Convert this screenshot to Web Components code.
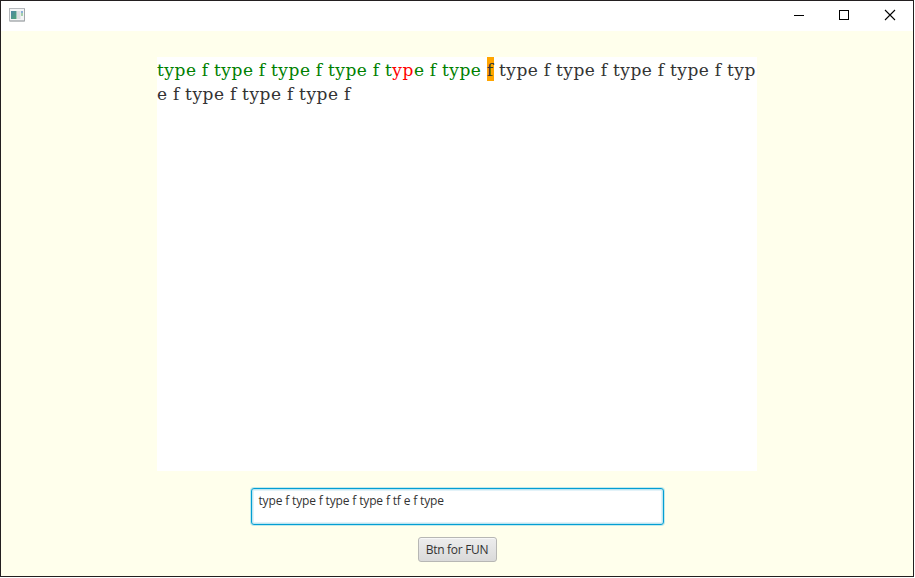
<!DOCTYPE html>
<html lang="en"><head><meta charset="utf-8"><title>Typing</title>
<style>html,body{margin:0;background:#fff;overflow:hidden}</style></head>
<body>
<app-window>
  <title-bar slot="bar"></title-bar>
  <typing-text></typing-text>
  <text-input>type f type f type f type f tf e f type</text-input>
  <push-button>Btn for FUN</push-button>
</app-window>
<script>
const define = (name, html) => customElements.define(name, class extends HTMLElement {
  constructor() { super(); this.attachShadow({mode: 'open'}).innerHTML = html; }
});
define('app-window', `<style>
:host{display:flex;flex-direction:column;box-sizing:border-box;width:914px;height:577px;border:1px solid #231f20;background:#ffffec}
main{display:flex;flex-direction:column;align-items:center;padding-top:26px}
</style><slot name="bar"></slot><main><slot></slot></main>`);
define('title-bar', `<style>
:host{display:flex;justify-content:space-between;height:30px;background:#fff}
.app{margin:7px 0 0 8px}.controls{display:flex}svg{display:block}
</style>
<svg class="app" width="16" height="14" viewBox="0 0 16 14">
<defs><linearGradient id="g" x1="0" y1="0" x2="1" y2="1"><stop offset="0" stop-color="#4c87a5"/><stop offset="1" stop-color="#4fa477"/></linearGradient></defs>
<rect x=".5" y=".5" width="15" height="12.5" fill="#f4f5f6" stroke="#b5b9bd"/><path d="M1 13H15.5V1" fill="none" stroke="#a3a7aa"/>
<rect x="2" y="3" width="5.5" height="8" fill="url(#g)"/><rect x="8" y="3" width="3.5" height="8" fill="#dcdfe2"/><rect x="12" y="3" width="2" height="2" fill="#8bb0d8"/><rect x="12" y="5" width="2" height="3" fill="#a4d0ad"/></svg>
<div class="controls">
<svg width="46" height="30" shape-rendering="crispEdges"><path d="M19 14h10v1H19z"/></svg>
<svg width="46" height="30" shape-rendering="crispEdges"><rect x="18.5" y="9.5" width="9" height="9" fill="none" stroke="#000"/></svg>
<svg width="46" height="30"><path d="M18 9l10 10M28 9L18 19" stroke="#000" stroke-width="1.1"/></svg>
</div>`);
define('typing-text', `<style>
:host{display:block;box-sizing:border-box;width:600px;height:414px;background:#fff;color:#333;font:17px/24px "DejaVu Serif",serif;letter-spacing:.53px;word-spacing:-.6px;white-space:pre}
.line{height:24px;line-height:26px}
.ok{color:#008000}.bad{color:#f00}.cur{display:inline-block;height:24px;vertical-align:top;background:#ffa500}
</style><div class="line"><span class="ok">type f type f type f type f t</span><span class="bad">yp</span><span class="ok">e f type </span><span class="cur">f</span> type f type f type f type f typ</div><div class="line">e f type f type f type f</div>`);
define('text-input', `<style>
:host{display:block;box-sizing:border-box;width:413px;height:37px;margin-top:17px;padding:3px 7px;border:1px solid #039ed3;border-radius:3px;background:#fff;box-shadow:0 0 0 1px #9bdcea99,inset 0 0 0 1px #9bdcea88,inset 0 0 0 2px #e3f2f8;color:#333;font:12px/17px "Open Sans",sans-serif;letter-spacing:-.155px;white-space:pre}
</style><slot></slot>`);
define('push-button', `<style>
:host{display:block;box-sizing:border-box;width:79px;height:25px;margin-top:12px;border:1px solid #b7b7b4;border-radius:3px;background:linear-gradient(#ededed,#dadada);box-shadow:inset 0 1px #f8f8f8;color:#333;font:12px/23px "Open Sans",sans-serif;letter-spacing:-.3px;text-align:center;white-space:pre}
</style><slot></slot>`);
</script></body></html>
